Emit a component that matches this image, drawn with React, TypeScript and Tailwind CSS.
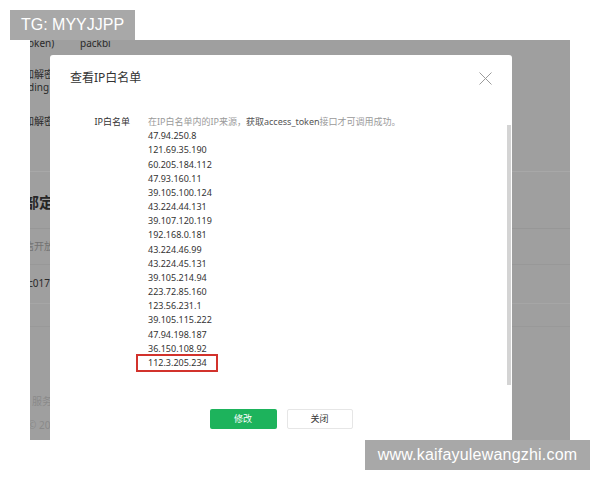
const ips = [
  "47.94.250.8",
  "121.69.35.190",
  "60.205.184.112",
  "47.93.160.11",
  "39.105.100.124",
  "43.224.44.131",
  "39.107.120.119",
  "192.168.0.181",
  "43.224.46.99",
  "43.224.45.131",
  "39.105.214.94",
  "223.72.85.160",
  "123.56.231.1",
  "39.105.115.222",
  "47.94.198.187",
  "36.150.108.92",
];

function CloseIcon() {
  return (
    <svg width="13" height="13" viewBox="0 0 13 13" fill="none">
      <path d="M0.5 0.5L12.5 12.5M12.5 0.5L0.5 12.5" stroke="#9b9b9b" strokeWidth="1" />
    </svg>
  );
}

export default function App() {
  return (
    <div className="relative w-[600px] h-[480px] overflow-hidden bg-white font-['Noto_Sans','Noto_Sans_CJK_SC',sans-serif]">
      {/* dimmed page behind the dialog */}
      <div className="relative ml-[30px] mt-[40px] w-[540px] h-[400px] overflow-hidden bg-[#9f9f9f] text-[10px] text-[#2a2a2a]">
        <div className="flex flex-col">
          <div className="-mt-[4px] flex h-[14px] leading-[14px]">
            <span className="w-[52px] -ml-[2px]">oken)</span>
            <span>packbi</span>
          </div>
          <div className="mt-[18px] -ml-[6px] leading-[13px]">
            <div>加解密</div>
            <div className="ml-[4px]">ding</div>
          </div>
          <div className="mt-[21px] -ml-[6px] leading-[13px]">加解密</div>
          <div className="mt-[43px] h-px bg-[#a8a8a8]" />
          <div className="mt-[20px] -ml-[6px] text-[15px] font-bold leading-[20px] text-[#262626]">部定的</div>
          <div className="mt-[16px] h-px bg-[#979797]" />
          <div className="mt-[11px] -ml-[6px] leading-[13px] text-[#727272]">信开放</div>
          <div className="mt-[11px] h-px bg-[#989898]" />
          <div className="mt-[12px] -ml-[2px] leading-[13px]">c017f</div>
          <div className="mt-[13px] h-px bg-[#a6a6a6]" />
          <div className="mt-[22px] h-px bg-[#999999]" />
          <div className="mt-[68px] ml-[2px] leading-[13px] text-[#8a8a8a]">服务</div>
          <div className="mt-[11px] -ml-[2px] leading-[13px] text-[#8a8a8a]">© 201</div>
        </div>

        {/* dialog */}
        <div className="absolute left-[20px] top-[15px] w-[462px] h-[400px] rounded-t-[3px] bg-white text-[#333]">
          <div className="flex h-[46px] items-center justify-between px-[20px]">
            <span className="text-[12px] leading-[16px]">查看IP白名单</span>
            <CloseIcon />
          </div>
          <div className="mt-[14px] flex text-[9px] leading-[14.17px]">
            <div className="w-[80px] text-right text-[#333]">IP白名单</div>
            <div className="ml-[18px] flex flex-col">
              <span className="text-[#9a9a9a]">
                在IP白名单内的IP来源，<span className="text-[#555]">获取access_token</span>接口才可调用成功。
              </span>
              {ips.map((ip) => (
                <span key={ip}>{ip}</span>
              ))}
              <span className="relative">
                112.3.205.234
                <span className="absolute left-[-12px] top-[-2px] h-[18px] w-[82px] border-[2px] border-[#d2322c]" />
              </span>
            </div>
          </div>
          <div className="mt-[39px] flex justify-center gap-[10px] text-[9px]">
            <button className="flex h-[20px] w-[67px] items-center justify-center rounded-[2px] bg-[#1db35c] text-white">
              修改
            </button>
            <button className="flex h-[20px] w-[66px] items-center justify-center rounded-[2px] border border-[#e6e6e6] bg-white text-[#353535]">
              关闭
            </button>
          </div>
          <div className="absolute right-[1px] top-[70px] h-[260px] w-[4px] bg-[#d4d4d4]" />
        </div>
      </div>

      {/* watermarks */}
      <div className="absolute left-[10px] top-[10px] flex h-[30px] w-[125px] items-center justify-center bg-[#a8a8a8] font-['Liberation_Sans',sans-serif] text-[16px] text-white">
        TG: MYYJJPP
      </div>
      <div className="absolute left-[365px] top-[440px] flex h-[30px] w-[225px] items-center justify-center bg-[#a8a8a8] font-['Liberation_Sans',sans-serif] text-[16px] tracking-[0.2px] text-white">
        www.kaifayulewangzhi.com
      </div>
    </div>
  );
}
